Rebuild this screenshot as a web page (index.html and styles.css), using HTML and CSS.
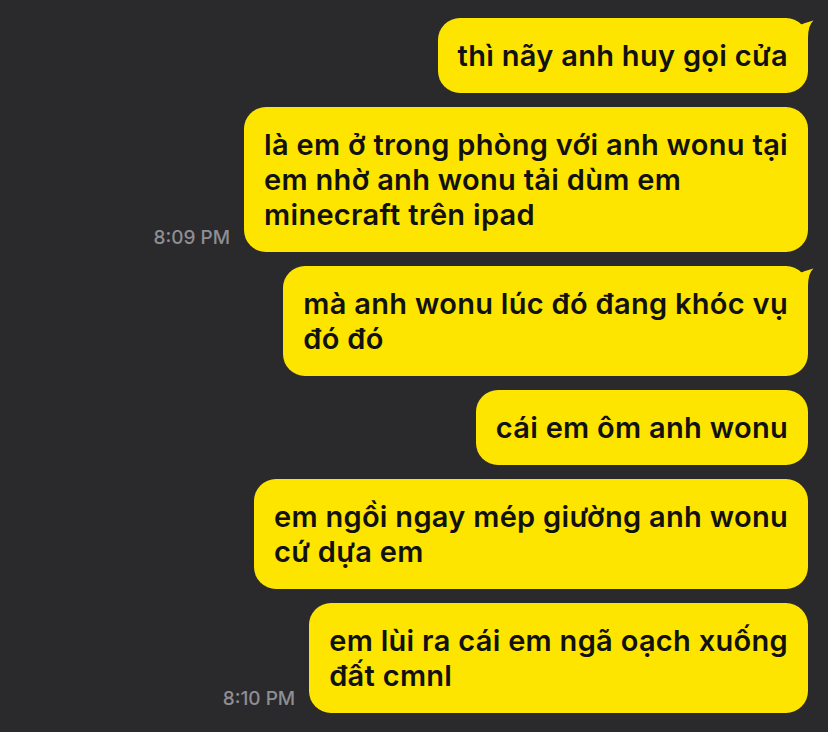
FILE: index.html
```html
<!DOCTYPE html>
<html lang="vi">
<head>
    <meta charset="UTF-8">
    <meta name="viewport" content="width=device-width, initial-scale=1.0">
    <title>Chat</title>
    <link rel="stylesheet" href="styles.css">
</head>
<body>
    <div class="chat">
        <!-- 8:09 PM group -->
        <div class="row">
            <div class="bubble">thì nãy anh huy gọi cửa
                <svg class="tail" viewBox="0 0 24 26" width="24" height="26"><path d="M10 7 Q16 4.5 23.5 2.5 Q18 7 18 20 L18 26 L8 26 Z"/></svg>
            </div>
        </div>
        <div class="row">
            <span class="time">8:09 PM</span>
            <div class="bubble">là em ở trong phòng với anh wonu tại<br>em nhờ anh wonu tải dùm em<br>minecraft trên ipad</div>
        </div>

        <!-- 8:10 PM group -->
        <div class="row">
            <div class="bubble">mà anh wonu lúc đó đang khóc vụ<br>đó đó
                <svg class="tail" viewBox="0 0 24 26" width="24" height="26"><path d="M10 7 Q16 4.5 23.5 2.5 Q18 7 18 20 L18 26 L8 26 Z"/></svg>
            </div>
        </div>
        <div class="row">
            <div class="bubble">cái em ôm anh wonu</div>
        </div>
        <div class="row">
            <div class="bubble">em ngồi ngay mép giường anh wonu<br>cứ dựa em</div>
        </div>
        <div class="row">
            <span class="time">8:10 PM</span>
            <div class="bubble">em lùi ra cái em ngã oạch xuống<br>đất cmnl</div>
        </div>
    </div>
</body>
</html>
```

FILE: styles.css
```css
* {
    box-sizing: border-box;
    margin: 0;
    padding: 0;
}

body {
    background-color: #2a2a2c;
    font-family: Inter, "Noto Sans", sans-serif;
    min-height: 100vh;
}

.chat {
    display: flex;
    flex-direction: column;
    align-items: flex-end;
    gap: 14px;
    padding: 18px 20px 0 0;
}

.row {
    display: flex;
    align-items: flex-end;
    gap: 14px;
}

.time {
    color: #8e8e93;
    font-size: 19px;
    font-weight: 500;
    padding-bottom: 3px;
    white-space: nowrap;
}

.bubble {
    position: relative;
    background-color: #fee500;
    color: #111;
    font-size: 29px;
    font-weight: 600;
    letter-spacing: 0.3px;
    line-height: 35px;
    padding: 20px;
    border-radius: 22px;
    white-space: nowrap;
}

.tail {
    position: absolute;
    top: 0;
    right: -6px;
    fill: #fee500;
}
```
